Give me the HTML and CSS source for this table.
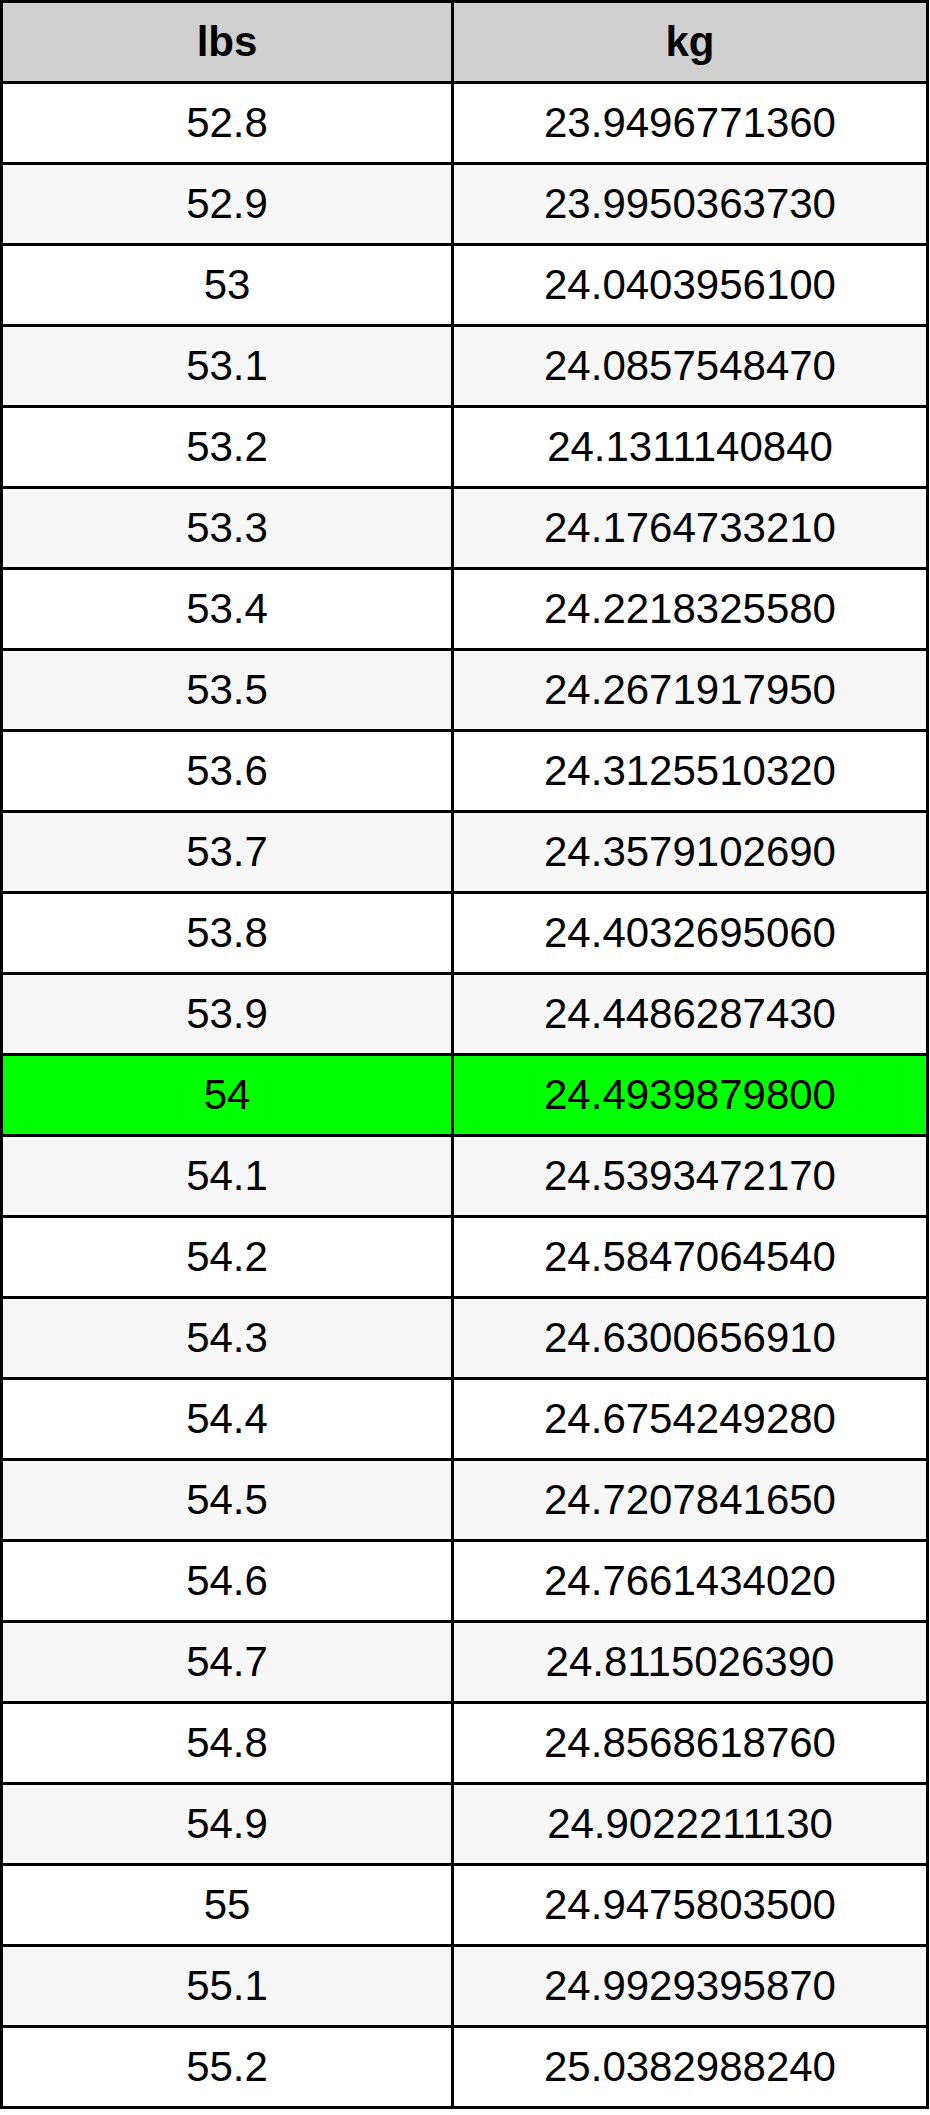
FILE: index.html
```html
<!DOCTYPE html>
<html>
<head>
<meta charset="utf-8">
<link rel="stylesheet" href="styles.css">
</head>
<body>
<table class="conv">
<thead>
<tr><th class="c1">lbs</th><th class="c2">kg</th></tr>
</thead>
<tbody>
<tr><td>52.8</td><td>23.9496771360</td></tr>
<tr class="alt"><td>52.9</td><td>23.9950363730</td></tr>
<tr><td>53</td><td>24.0403956100</td></tr>
<tr class="alt"><td>53.1</td><td>24.0857548470</td></tr>
<tr><td>53.2</td><td>24.1311140840</td></tr>
<tr class="alt"><td>53.3</td><td>24.1764733210</td></tr>
<tr><td>53.4</td><td>24.2218325580</td></tr>
<tr class="alt"><td>53.5</td><td>24.2671917950</td></tr>
<tr><td>53.6</td><td>24.3125510320</td></tr>
<tr class="alt"><td>53.7</td><td>24.3579102690</td></tr>
<tr><td>53.8</td><td>24.4032695060</td></tr>
<tr class="alt"><td>53.9</td><td>24.4486287430</td></tr>
<tr class="hl"><td>54</td><td>24.4939879800</td></tr>
<tr class="alt"><td>54.1</td><td>24.5393472170</td></tr>
<tr><td>54.2</td><td>24.5847064540</td></tr>
<tr class="alt"><td>54.3</td><td>24.6300656910</td></tr>
<tr><td>54.4</td><td>24.6754249280</td></tr>
<tr class="alt"><td>54.5</td><td>24.7207841650</td></tr>
<tr><td>54.6</td><td>24.7661434020</td></tr>
<tr class="alt"><td>54.7</td><td>24.8115026390</td></tr>
<tr><td>54.8</td><td>24.8568618760</td></tr>
<tr class="alt"><td>54.9</td><td>24.9022211130</td></tr>
<tr><td>55</td><td>24.9475803500</td></tr>
<tr class="alt"><td>55.1</td><td>24.9929395870</td></tr>
<tr><td>55.2</td><td>25.0382988240</td></tr>
</tbody>
</table>
</body>
</html>
```

FILE: styles.css
```css
html, body {
  margin: 0;
  padding: 0;
  background: #ffffff;
}
.conv {
  border-collapse: separate;
  border-spacing: 0;
  border-top: 3px solid #000;
  border-left: 3px solid #000;
  table-layout: fixed;
  width: 929px;
  font-family: "Liberation Sans", Arial, sans-serif;
  font-size: 42px;
  color: #000;
}
.conv th, .conv td {
  height: 78px;
  padding: 0;
  text-align: center;
  vertical-align: middle;
  border-right: 3px solid #000;
  border-bottom: 3px solid #000;
  box-sizing: content-box;
  line-height: 78px;
}
.conv th {
  background: #d0d0d0;
  font-weight: bold;
}
.conv .c1 { width: 448px; }
.conv .c2 { width: 472px; }
.conv td { background: #ffffff; }
.conv tr.alt td { background: #f7f7f7; }
.conv tr.hl td { background: #00ff00; }
```
